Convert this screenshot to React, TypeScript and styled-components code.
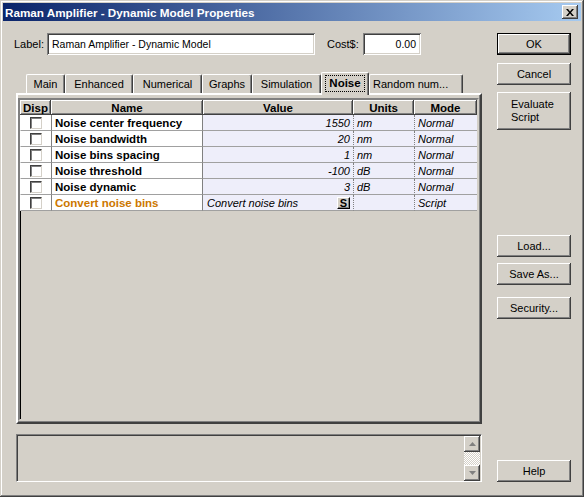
import React from 'react';
import styled, { createGlobalStyle } from 'styled-components';

const GlobalStyle = createGlobalStyle`
  html, body {
    margin: 0;
    padding: 0;
    background: #d4d0c8;
  }
  body {
    font-family: 'Liberation Sans', Arial, sans-serif;
    font-size: 11px;
    color: #000;
  }
`;

const raised = `
  box-shadow: inset -1px -1px #404040, inset 1px 1px #fff,
    inset -2px -2px #808080, inset 2px 2px #d4d0c8;
`;

const sunken = `
  box-shadow: inset 1px 1px #808080, inset -1px -1px #fff,
    inset 2px 2px #404040, inset -2px -2px #d4d0c8;
`;

interface Param {
  name: string;
  value: string;
  units: string;
  mode: string;
  script?: boolean;
}

const params: Param[] = [
  { name: 'Noise center frequency', value: '1550', units: 'nm', mode: 'Normal' },
  { name: 'Noise bandwidth', value: '20', units: 'nm', mode: 'Normal' },
  { name: 'Noise bins spacing', value: '1', units: 'nm', mode: 'Normal' },
  { name: 'Noise threshold', value: '-100', units: 'dB', mode: 'Normal' },
  { name: 'Noise dynamic', value: '3', units: 'dB', mode: 'Normal' },
  { name: 'Convert noise bins', value: 'Convert noise bins', units: '', mode: 'Script', script: true },
];

const tabs = [
  { label: 'Main', width: 39 },
  { label: 'Enhanced', width: 68 },
  { label: 'Numerical', width: 69 },
  { label: 'Graphs', width: 50 },
  { label: 'Simulation', width: 69 },
  { label: 'Noise', width: 48 },
  { label: 'Random num...', width: 94, left: true },
];

export default function App() {
  return (
    <>
      <GlobalStyle />
      <Window>
        <TitleBar>
          <TitleText>Raman Amplifier - Dynamic Model Properties</TitleText>
          <CloseButton>
            <svg width="8" height="7" viewBox="0 0 8 7">
              <path d="M0 0h2l2 2.5L6 0h2L5 3.5 8 7H6L4 4.5 2 7H0l3-3.5z" fill="#000" />
            </svg>
          </CloseButton>
        </TitleBar>

        <Body>
          <LeftColumn>
            <FieldRow>
              <FieldLabel $width={33}>Label:</FieldLabel>
              <TextBox $width={268}>Raman Amplifier - Dynamic Model</TextBox>
              <FieldLabel $width={36} $gap={12}>Cost$:</FieldLabel>
              <TextBox $width={58} $right>0.00</TextBox>
            </FieldRow>

            <TabStrip>
              {tabs.map((t) => (
                <Tab key={t.label} $width={t.width} $left={t.left} $active={t.label === 'Noise'}>
                  {t.label === 'Noise' ? <Focus>{t.label}</Focus> : t.label}
                </Tab>
              ))}
            </TabStrip>

            <TabPage>
              <Grid>
                <HeadCell>Disp</HeadCell>
                <HeadCell>Name</HeadCell>
                <HeadCell>Value</HeadCell>
                <HeadCell>Units</HeadCell>
                <HeadCell>Mode</HeadCell>

                {params.map((p) => (
                  <React.Fragment key={p.name}>
                    <DispCell>
                      <CheckBox />
                    </DispCell>
                    <NameCell $script={p.script}>{p.name}</NameCell>
                    <ValueCell $script={p.script}>
                      {p.value}
                      {p.script && <ScriptButton>S</ScriptButton>}
                    </ValueCell>
                    <DottedCell>{p.units}</DottedCell>
                    <DottedCell>{p.mode}</DottedCell>
                  </React.Fragment>
                ))}
              </Grid>
            </TabPage>

            <Memo>
              <ScrollBar>
                <ArrowButton>
                  <svg width="7" height="4" viewBox="0 0 7 4">
                    <path d="M3.5 0L7 4H0z" fill="#808080" />
                  </svg>
                </ArrowButton>
                <Track />
                <ArrowButton>
                  <svg width="7" height="4" viewBox="0 0 7 4">
                    <path d="M0 0h7L3.5 4z" fill="#808080" />
                  </svg>
                </ArrowButton>
              </ScrollBar>
            </Memo>
          </LeftColumn>

          <RightColumn>
            <Button $default $top={12}>OK</Button>
            <Button $top={8}>Cancel</Button>
            <Button $top={7} $tall>
              Evaluate
              <br />
              Script
            </Button>
            <Button $top={105}>Load...</Button>
            <Button $top={6}>Save As...</Button>
            <Button $top={12}>Security...</Button>
            <Button $top={0} $push>Help</Button>
          </RightColumn>
        </Body>
      </Window>
    </>
  );
}

const Window = styled.div`
  width: 584px;
  height: 497px;
  box-sizing: border-box;
  padding: 3px;
  background: #d4d0c8;
  box-shadow: inset -1px -1px #404040, inset 1px 1px #d4d0c8,
    inset -2px -2px #808080, inset 2px 2px #fff;
  display: flex;
  flex-direction: column;
`;

const TitleBar = styled.div`
  height: 18px;
  flex: none;
  display: flex;
  align-items: center;
  justify-content: space-between;
  padding: 0 3px 0 2px;
  background: linear-gradient(to right, #0a246a, #a6caf0);
`;

const TitleText = styled.span`
  color: #fff;
  font-weight: bold;
  font-size: 11.7px;
  white-space: nowrap;
`;

const CloseButton = styled.div`
  width: 16px;
  height: 14px;
  background: #d4d0c8;
  display: flex;
  align-items: center;
  justify-content: center;
  ${raised}
`;

const Body = styled.div`
  flex: 1;
  display: flex;
  padding: 0 10px 12px 11px;
  gap: 15px;
`;

const LeftColumn = styled.div`
  width: 468px;
  display: flex;
  flex-direction: column;
`;

const FieldRow = styled.div`
  display: flex;
  align-items: center;
  margin-top: 12px;
  height: 22px;
`;

const FieldLabel = styled.span<{ $width: number; $gap?: number }>`
  margin-left: ${({ $gap }) => $gap ?? 0}px;
  width: ${({ $width }) => $width}px;
  font-size: 11px;
  white-space: nowrap;
`;

const TextBox = styled.div<{ $width: number; $right?: boolean }>`
  width: ${({ $width }) => $width}px;
  height: 22px;
  box-sizing: border-box;
  background: #fff;
  padding: 0 5px;
  display: flex;
  align-items: center;
  justify-content: ${({ $right }) => ($right ? 'flex-end' : 'flex-start')};
  font-size: 10.5px;
  ${sunken}
`;

const TabStrip = styled.div`
  display: flex;
  align-items: flex-end;
  height: 21px;
  margin-top: 17px;
  padding-left: 12px;
  position: relative;
  z-index: 1;
`;

const Tab = styled.div<{ $active?: boolean; $width: number; $left?: boolean }>`
  width: ${({ $width }) => $width}px;
  height: ${({ $active }) => ($active ? 23 : 19)}px;
  margin-bottom: ${({ $active }) => ($active ? -2 : 0)}px;
  box-sizing: border-box;
  padding-top: ${({ $active }) => ($active ? 2 : 3)}px;
  padding-left: ${({ $left }) => ($left ? 3 : 0)}px;
  background: #d4d0c8;
  font-size: 11px;
  font-weight: ${({ $active }) => ($active ? 'bold' : 'normal')};
  white-space: nowrap;
  border-top: 1px solid #fff;
  border-left: 1px solid #fff;
  border-right: 1px solid #404040;
  border-top-left-radius: 2px;
  border-top-right-radius: 2px;
  box-shadow: inset -1px 0 #808080;
  display: flex;
  justify-content: ${({ $left }) => ($left ? 'flex-start' : 'center')};
  align-items: flex-start;
`;

const Focus = styled.span`
  outline: 1px dotted #000;
  padding: 1px 3px;
  line-height: 13px;
  margin-top: 1px;
  font-size: 11.5px;
`;

const TabPage = styled.div`
  margin-left: 2px;
  height: 331px;
  box-sizing: border-box;
  padding: 3px 1px 1px 0;
  border: 2px solid;
  border-color: #fff #404040 #404040 #fff;
  box-shadow: inset -1px -1px #808080;
`;

const Grid = styled.div`
  height: 100%;
  box-sizing: border-box;
  display: grid;
  grid-template-columns: 31px 152px 150px 61px 63px;
  grid-auto-rows: 16px;
  grid-template-rows: 15px;
  align-content: start;
  border: 2px solid;
  border-color: #808080 #d4d0c8 #d4d0c8 #808080;
  box-shadow: inset 1px 1px #000;
  background: #d4d0c8;
`;

const HeadCell = styled.div`
  font-weight: bold;
  font-size: 11.5px;
  display: flex;
  align-items: center;
  justify-content: center;
  background: #d4d0c8;
  ${raised}
`;

const Cell = styled.div`
  box-sizing: border-box;
  border-bottom: 1px solid #a0a0a0;
  display: flex;
  align-items: center;
  white-space: nowrap;
  overflow: hidden;
`;

const DispCell = styled(Cell)`
  background: #fff;
  justify-content: center;
  border-left: 1px solid #fff;
`;

const CheckBox = styled.div`
  width: 12px;
  height: 12px;
  box-sizing: border-box;
  background: #fff;
  border: 1px solid;
  border-color: #404040 #d4d0c8 #d4d0c8 #404040;
  box-shadow: inset 1px 1px #808080;
`;

const NameCell = styled(Cell)<{ $script?: boolean }>`
  background: #fff;
  border-left: 1px solid #808080;
  border-right: 1px solid #808080;
  padding-left: 3px;
  font-weight: bold;
  font-size: 11.5px;
  color: ${({ $script }) => ($script ? '#cc7700' : '#000')};
`;

const ValueCell = styled(Cell)<{ $script?: boolean }>`
  background: #eeeefa;
  font-style: italic;
  justify-content: ${({ $script }) => ($script ? 'space-between' : 'flex-end')};
  padding: 0 3px 0 4px;
`;

const ScriptButton = styled.span`
  width: 13px;
  height: 12px;
  box-sizing: border-box;
  font-style: normal;
  font-weight: bold;
  font-size: 11px;
  line-height: 10px;
  display: flex;
  align-items: center;
  justify-content: center;
  background: #d4d0c8;
  border: 1px solid;
  border-color: #fff #000 #000 #fff;
  box-shadow: inset -1px -1px #808080;
`;

const DottedCell = styled(Cell)`
  background: #eeeefa;
  font-style: italic;
  border-left: 1px dotted #808080;
  padding-left: 3px;
`;

const Memo = styled.div`
  margin: 10px 0 0 2px;
  height: 48px;
  box-sizing: border-box;
  border: 1px solid;
  border-color: #808080 #fff #fff #808080;
  box-shadow: inset 1px 1px #404040;
  display: flex;
  justify-content: flex-end;
  padding: 1px 1px 0 1px;
`;

const ScrollBar = styled.div`
  width: 16px;
  display: flex;
  flex-direction: column;
`;

const ArrowButton = styled.div`
  width: 16px;
  height: 16px;
  flex: none;
  background: #d4d0c8;
  display: flex;
  align-items: center;
  justify-content: center;
  ${raised}
`;

const Track = styled.div`
  flex: 1;
  background-color: #fff;
  background-image: conic-gradient(#d4d0c8 25%, #fff 0 50%, #d4d0c8 0 75%, #fff 0);
  background-size: 2px 2px;
`;

const RightColumn = styled.div`
  width: 74px;
  display: flex;
  flex-direction: column;
`;

const Button = styled.div<{ $top: number; $default?: boolean; $tall?: boolean; $push?: boolean }>`
  margin-top: ${({ $top, $push }) => ($push ? 'auto' : `${$top}px`)};
  height: ${({ $tall }) => ($tall ? 38 : 22)}px;
  box-sizing: border-box;
  background: #d4d0c8;
  font-size: 11px;
  display: flex;
  align-items: center;
  justify-content: ${({ $tall }) => ($tall ? 'flex-start' : 'center')};
  padding-left: ${({ $tall }) => ($tall ? 14 : 0)}px;
  line-height: 13px;
  ${({ $default }) =>
    $default
      ? `border: 1px solid #000;
         box-shadow: inset -1px -1px #404040, inset 1px 1px #fff, inset -2px -2px #808080;`
      : raised}
`;
